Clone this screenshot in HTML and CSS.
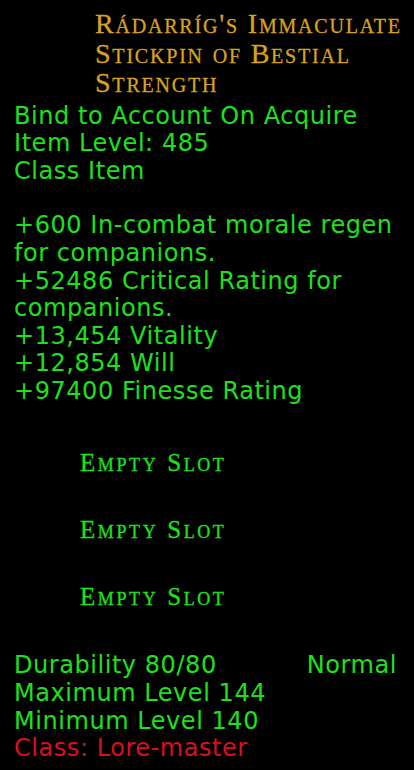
FILE: index.html
```html
<!DOCTYPE html>
<html>
<head>
<meta charset="utf-8">
<link rel="stylesheet" href="styles.css">
</head>
<body>
<div class="tooltip">
  <div class="title">Rádarríg's Immaculate<br>Stickpin of Bestial<br>Strength</div>
  <div class="info">
    <div class="line">Bind to Account On Acquire</div>
    <div class="line">Item Level: 485</div>
    <div class="line">Class Item</div>
  </div>
  <div class="stats">
    <div class="line">+600 In-combat morale regen<br>for companions.</div>
    <div class="line">+52486 Critical Rating for<br>companions.</div>
    <div class="line">+13,454 Vitality</div>
    <div class="line">+12,854 Will</div>
    <div class="line">+97400 Finesse Rating</div>
  </div>
  <div class="slots">
    <div class="slot">Empty Slot</div>
    <div class="slot">Empty Slot</div>
    <div class="slot">Empty Slot</div>
  </div>
  <div class="footer">
    <div class="row"><span>Durability 80/80</span><span class="quality">Normal</span></div>
    <div class="line">Maximum Level 144</div>
    <div class="line">Minimum Level 140</div>
    <div class="line req">Class: Lore-master</div>
  </div>
</div>
</body>
</html>
```
FILE: styles.css
```css
html, body {
  margin: 0;
  padding: 0;
  background: #000;
}
.tooltip {
  width: 414px;
  height: 770px;
  box-sizing: border-box;
  padding: 9px 17px 0 14px;
  font-family: "DejaVu Sans", Verdana, sans-serif;
  font-size: 24px;
  line-height: 27.6px;
  letter-spacing: 0.55px;
  color: #1ee01e;
  white-space: nowrap;
}
.title {
  padding-left: 81px;
  font-family: "Liberation Serif", serif;
  font-variant: small-caps;
  font-size: 28px;
  line-height: 29.5px;
  color: #d8a21e;
  letter-spacing: 1.8px;
  -webkit-text-stroke: 0.3px #d8a21e;
}
.info {
  margin-top: 5px;
}
.stats {
  margin-top: 27.1px;
}
.slots {
  display: flex;
  flex-direction: column;
  gap: 39px;
  padding-left: 66px;
  margin-top: 43.5px;
}
.slot {
  font-family: "Liberation Serif", serif;
  font-variant: small-caps;
  font-size: 25px;
  line-height: 28px;
  letter-spacing: 2.6px;
  -webkit-text-stroke: 0.3px #1ee01e;
}
.footer {
  margin-top: 41.3px;
}
.row {
  display: flex;
  justify-content: space-between;
}
.req {
  color: #d8101e;
}
```
